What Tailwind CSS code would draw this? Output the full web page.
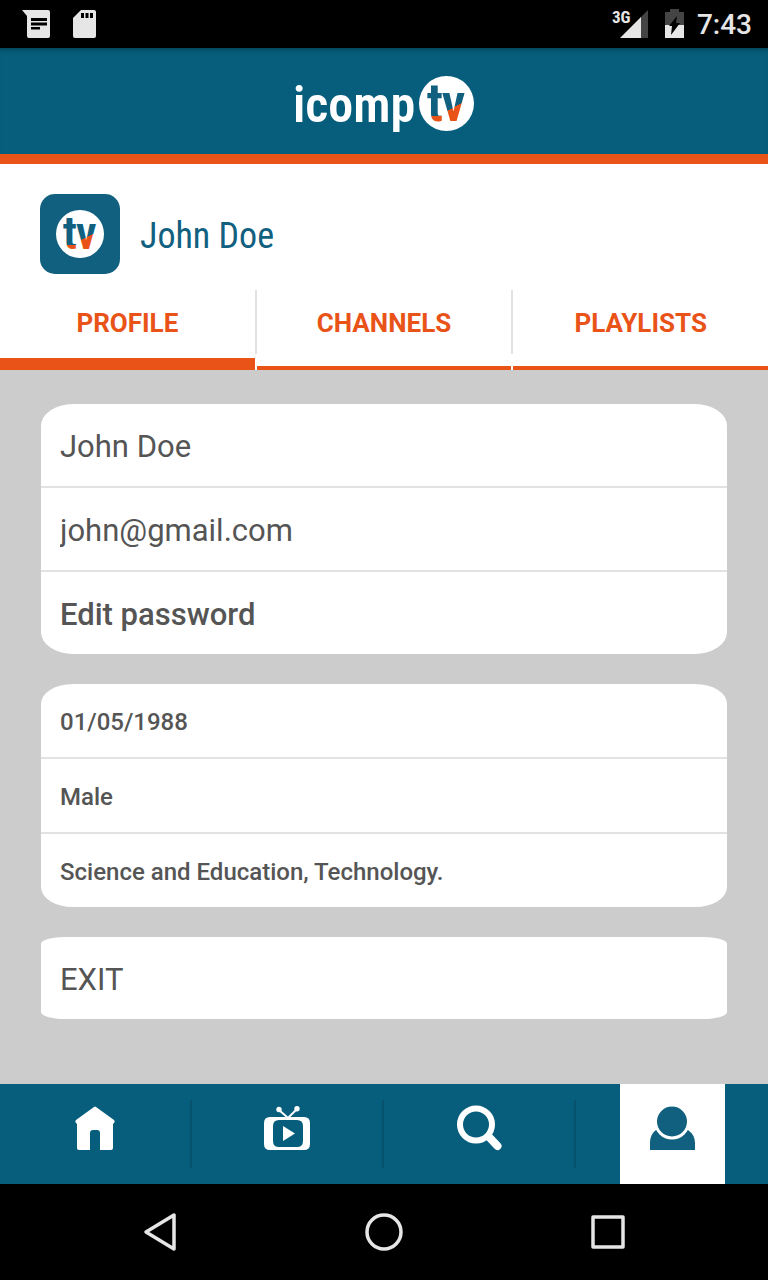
<!DOCTYPE html>
<html lang="en">
<head>
    <meta charset="UTF-8">
    <meta name="viewport" content="width=device-width, initial-scale=1.0">
    <title>icomp tv - Profile</title>
    <script src="https://cdn.jsdelivr.net/npm/@tailwindcss/browser@4"></script>
</head>
<body class="min-h-screen flex flex-col bg-[#cccccc] font-['Roboto',sans-serif] text-[#555555]">

    <!-- Status bar -->
    <div class="h-12 shrink-0 bg-black flex items-center justify-between px-4 text-[#e6e6e6]">
        <div class="flex items-center gap-5 pl-1">
            <svg class="w-8 h-8" viewBox="0 0 32 32" aria-hidden="true">
                <path fill="#e6e6e6" d="M2 2h26q2 0 2 2v24q0 2-2 2H9q-2 0-2-2V8z"/>
                <path fill="#000" d="M11 10h16v3H11zM11 14.500h16v3H11zM11 19h9v2.500h-9z"/>
            </svg>
            <svg class="w-6 h-8" viewBox="0 0 24 32" aria-hidden="true">
                <path fill="#e6e6e6" d="M9 2h13q2 0 2 2v24q0 2-2 2H3q-2 0-2-2V10z"/>
                <path fill="#000" d="M9 5h3v5H9zM13.500 5h3v5h-3zM18 5h3v5h-3z"/>
            </svg>
        </div>
        <div class="flex items-center gap-3">
            <div class="flex items-center gap-4">
                <svg class="w-9 h-8 overflow-visible" viewBox="0 0 36 32" aria-hidden="true">
                    <path fill="#444" d="M35 2v28h-8V10z"/>
                    <path fill="#e6e6e6" d="M28 9v21H7z"/>
                    <text x="-1" y="15" fill="#e6e6e6" font-family="Roboto Condensed, Roboto" font-size="17" font-weight="700">3G</text>
                </svg>
                <svg class="w-5 h-8" viewBox="0 0 20 32" aria-hidden="true">
                    <path fill="#444" d="M0 4h5V1h9v3h5v13H0z"/>
                    <path fill="#e6e6e6" d="M0 17h19v13H0z"/>
                    <path fill="#000" d="M12 8l-1 7h4L6 27l1-9H4z"/>
                </svg>
            </div>
            <span class="pt-[2px] text-[28px] leading-8 font-medium">7:43</span>
        </div>
    </div>

    <!-- Header -->
    <header class="h-[116px] shrink-0 flex justify-center items-center bg-[#065e7c] border-b-10 border-[#e95318] inset-shadow-[0_6px_6px_-6px_#00000080]">
        <svg class="w-[182px] h-[66px] overflow-visible" viewBox="0 0 182 66" role="img" aria-label="icomp tv">
            <defs>
                <linearGradient id="t-fill" gradientUnits="userSpaceOnUse" x1="0" y1="0" x2="0" y2="56">
                    <stop offset="0.72" stop-color="#12607f"/>
                    <stop offset="0.72" stop-color="#e95318"/>
                </linearGradient>
                <linearGradient id="v-fill" gradientUnits="userSpaceOnUse" x1="28" y1="16" x2="47" y2="52">
                    <stop offset="0.43" stop-color="#12607f"/>
                    <stop offset="0.43" stop-color="#e95318"/>
                </linearGradient>
                <symbol id="tv-mark" viewBox="0 0 56 56">
                    <circle cx="28" cy="28" r="28" fill="#fff"/>
                    <text x="8" y="46" fill="url(#t-fill)" font-family="Roboto Condensed, Roboto" font-size="55" font-weight="600">t</text>
                    <text x="23" y="46" fill="url(#v-fill)" font-family="Roboto Condensed, Roboto" font-size="55" font-weight="600">v</text>
                </symbol>
            </defs>
            <text x="0" y="54" fill="#fff" font-family="Roboto Condensed, Roboto" font-size="50" font-weight="600">icomp</text>
            <use href="#tv-mark" x="126" y="8" width="55" height="55"/>
        </svg>
    </header>

    <!-- User and tabs -->
    <section class="bg-white">
        <div class="flex items-center gap-5 px-10 pt-[30px] pb-4">
            <svg class="w-20 h-20" viewBox="0 0 80 80" role="img" aria-label="tv">
                <rect width="80" height="80" rx="15" fill="#12607f"/>
                <use href="#tv-mark" x="16" y="16" width="48" height="48"/>
            </svg>
            <h1 class="pt-1 text-[36px] leading-10 text-[#12607f] font-['Roboto_Condensed','Liberation_Sans_Narrow',Roboto,sans-serif]">John Doe</h1>
        </div>
        <nav class="grid grid-cols-3 h-20 gap-[2px] text-[26px] font-bold text-[#e95318]">
            <a href="#profile" class="relative flex justify-center items-center pb-[2px] border-b-12 border-[#e95318]">PROFILE
                <span class="absolute top-0 -right-[2px] w-[2px] h-16 bg-[#e2e2e2]"></span></a>
            <a href="#channels" class="relative flex justify-center items-center pb-[10px] border-b-4 border-[#e95318]">CHANNELS
                <span class="absolute top-0 -right-[2px] w-[2px] h-16 bg-[#e2e2e2]"></span></a>
            <a href="#playlists" class="flex justify-center items-center pb-[10px] border-b-4 border-[#e95318]">PLAYLISTS</a>
        </nav>
    </section>

    <!-- Account details -->
    <main class="grow px-10 pt-[34px] pb-16">
        <form class="flex flex-col gap-[30px] px-px">
            <div class="bg-white divide-y-2 divide-[#e2e2e2] overflow-hidden rounded-[32px/22px] text-[31px]">
                <input type="text" aria-label="Name" value="John Doe" class="block w-full h-[84px] px-[19px] pt-[2px] outline-none">
                <input type="email" aria-label="Email" value="john@gmail.com" class="block w-full h-[84px] px-[19px] pt-[2px] outline-none">
                <button type="button" class="block w-full h-[82px] px-[19px] pt-1 text-left font-medium">Edit password</button>
            </div>
            <div class="bg-white divide-y-2 divide-[#e2e2e2] overflow-hidden rounded-[32px/20px] text-2xl font-medium">
                <input type="text" aria-label="Birth date" value="01/05/1988" class="block w-full h-[75px] px-[19px] pt-[2px] outline-none">
                <input type="text" aria-label="Gender" value="Male" class="block w-full h-[75px] px-[19px] pt-[2px] outline-none">
                <input type="text" aria-label="Interests" value="Science and Education, Technology." class="block w-full h-[73px] px-[19px] pt-[2px] outline-none">
            </div>
            <button type="button" class="h-[82px] px-[19px] pt-1 bg-white rounded-[24px/7px] text-left text-[31px]">EXIT</button>
        </form>
    </main>

    <!-- App navigation -->
    <nav class="h-[100px] shrink-0 grid grid-cols-4 bg-[#065e7c]">
        <a href="#home" aria-label="Home" class="relative flex justify-center items-center pb-3">
            <svg class="w-12 h-12" viewBox="0 0 48 48" fill="#fff">
                <path d="M22 3q1-1 2 0l18 13q1.500 1.500 0 3l-1 1v24q0 2-2 2H28V29q0-3-3-3h-4q-3 0-3 3v17H7q-2 0-2-2V20l-1-1q-1.500-1.500 0-3z"/>
            </svg>
            <span class="absolute right-0 top-4 w-[2px] h-[68px] bg-[#07516c]"></span>
        </a>
        <a href="#tv" aria-label="TV" class="relative flex justify-center items-center pb-3">
            <svg class="w-12 h-12" viewBox="0 0 48 48" fill="#fff">
                <path fill-rule="evenodd" d="M6 13h34q6 0 6 6v21q0 6-6 6H6q-6 0-6-6V19q0-6 6-6zM15 16q-6 0-6 6v15q0 6 6 6h18q6 0 6-6V22q0-6-6-6z"/>
                <path d="M19 22l12 7.500L19 37z"/>
                <path d="M15 6l9 8 9-9" fill="none" stroke="#fff" stroke-width="2"/>
                <circle cx="15" cy="5.500" r="2.700"/>
                <circle cx="33" cy="4.700" r="2.700"/>
            </svg>
            <span class="absolute right-0 top-4 w-[2px] h-[68px] bg-[#07516c]"></span>
        </a>
        <a href="#search" aria-label="Search" class="relative flex justify-center items-center pb-3">
            <svg class="w-12 h-12" viewBox="0 0 48 48" fill="none" stroke="#fff">
                <circle cx="20" cy="20.500" r="16" stroke-width="6"/>
                <path d="M33 33l8.500 9" stroke-width="8" stroke-linecap="round"/>
            </svg>
            <span class="absolute right-0 top-4 w-[2px] h-[68px] bg-[#07516c]"></span>
        </a>
        <a href="#account" aria-label="Account" class="mx-auto w-[105px] flex justify-center items-center pb-3 bg-white">
            <svg class="w-12 h-12" viewBox="0 0 48 48">
                <path fill="#12607f" d="M2 46v-7Q2 30 8 26h32q7 5 7 13v7z"/>
                <circle cx="24" cy="17.500" r="16.500" fill="#12607f" stroke="#fff" stroke-width="3"/>
            </svg>
        </a>
    </nav>

    <!-- System buttons -->
    <div class="h-24 shrink-0 bg-black flex justify-center gap-44">
        <button type="button" aria-label="Back" class="w-12">
            <svg class="w-12 h-12" viewBox="0 0 48 48" fill="none" stroke="#e6e6e6" stroke-width="3.500" stroke-linejoin="round"><path d="M10 24l28-17v34z"/></svg>
        </button>
        <button type="button" aria-label="Home" class="w-12">
            <svg class="w-12 h-12" viewBox="0 0 48 48" fill="none" stroke="#e6e6e6" stroke-width="3.500"><circle cx="24" cy="24" r="17"/></svg>
        </button>
        <button type="button" aria-label="Recent apps" class="w-12">
            <svg class="w-12 h-12" viewBox="0 0 48 48" fill="none" stroke="#e6e6e6" stroke-width="3.500" stroke-linejoin="round"><rect x="9" y="9" width="30" height="30"/></svg>
        </button>
    </div>

</body>
</html>
